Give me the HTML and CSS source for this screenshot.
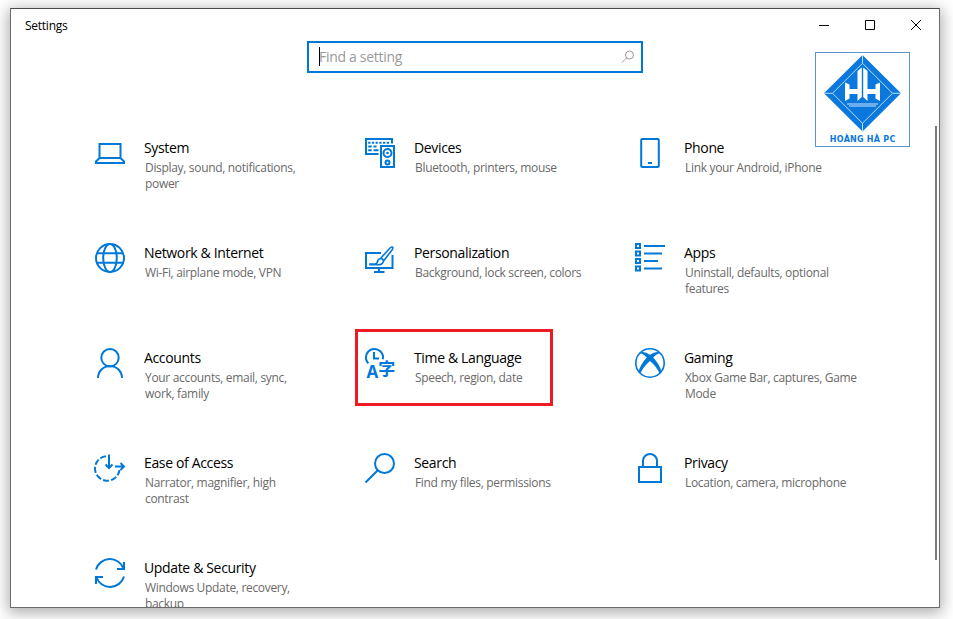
FILE: index.html
```html
<!DOCTYPE html>
<html lang="en">
<head>
<meta charset="utf-8">
<title>Settings</title>
<link rel="stylesheet" href="styles.css">
</head>
<body>
<div class="window">
  <div class="titlebar">
    <span class="caption">Settings</span>
    <svg class="controls" width="102" height="12" viewBox="0 0 102 12">
      <path d="M0 6.500h10M46.500 1.500h9v9h-9zM92 1l10 10M102 1l-10 10"/>
    </svg>
  </div>

  <div class="search">
    <span class="caret"></span>
    <span class="placeholder">Find a setting</span>
    <svg class="glass" width="14" height="14" viewBox="0 0 14 14"><circle cx="8.500" cy="5" r="4"/><path d="M5.600 7.900L1 12.500"/></svg>
  </div>

  <div class="grid">
    <div class="item">
      <svg class="icon" viewBox="0 0 30 30"><path d="M4.500 6h21v14h-21zM4.500 20L1 23.500V25h28v-1.500L25.500 20"/></svg>
      <div class="text"><div class="name">System</div><div class="desc">Display, sound, notifications,<br>power</div></div>
    </div>
    <div class="item">
      <svg class="icon" viewBox="0 0 30 30">
        <path d="M13.500 16H1V1h26v4.500"/>
        <path class="dots" d="M3.200 4.700h22"/>
        <path d="M3.200 8.500h3.500M8.500 8.500h3M3.200 12.300h3.500M8.500 12.300h5"/>
        <path d="M16 8h13v21H16z"/><circle cx="22.500" cy="15" r="4"/><circle cx="22.500" cy="24.500" r="2"/><circle class="fill" cx="22.500" cy="15" r="1.300"/>
      </svg>
      <div class="text"><div class="name">Devices</div><div class="desc">Bluetooth, printers, mouse</div></div>
    </div>
    <div class="item">
      <svg class="icon" viewBox="0 0 30 30"><rect x="6.200" y="1" width="17.600" height="28" rx="1"/><path d="M13 25h4"/></svg>
      <div class="text"><div class="name">Phone</div><div class="desc">Link your Android, iPhone</div></div>
    </div>

    <div class="item">
      <svg class="icon" viewBox="0 0 30 30"><circle cx="15" cy="15" r="14"/><ellipse cx="15" cy="15" rx="6.800" ry="14"/><path d="M2 10.300h26M2 19.700h26"/></svg>
      <div class="text"><div class="name">Network &amp; Internet</div><div class="desc">Wi-Fi, airplane mode, VPN</div></div>
    </div>
    <div class="item">
      <svg class="icon" viewBox="0 0 30 30">
        <path d="M16 10H1v15h26.500V12M14 25v4M9 29h10.500"/>
        <path class="thin" d="M15.500 15.500L25 5q1.800-1.500 2.600-.8t-.6 2.800L18.500 18M15.500 15.500a3 3 0 0 1 3 2.700q-1 3.600-5.500 3.600H5v-.7h5q2 0 2.500-2.600t3-3z"/>
      </svg>
      <div class="text"><div class="name">Personalization</div><div class="desc">Background, lock screen, colors</div></div>
    </div>
    <div class="item">
      <svg class="icon" viewBox="0 0 30 30">
        <path d="M1 1h4v4H1zM1 8.500h4v4H1zM1 16h4v4H1zM1 23.500h4v4H1z"/>
        <path d="M9 3h21M9 10.500h18M9 18h14M9 25.500h18"/>
      </svg>
      <div class="text"><div class="name">Apps</div><div class="desc">Uninstall, defaults, optional<br>features</div></div>
    </div>

    <div class="item">
      <svg class="icon" viewBox="0 0 30 30"><circle cx="15" cy="9.700" r="8.700"/><path d="M3 30a12 12 0 0 1 24 0"/></svg>
      <div class="text"><div class="name">Accounts</div><div class="desc">Your accounts, email, sync,<br>work, family</div></div>
    </div>
    <div class="item marked">
      <svg class="icon" viewBox="0 0 30 30">
        <path d="M3.400 15.400A8.500 8.500 0 1 1 17.800 11.300M9 4v6.500h5"/>
        <text class="latin" x="1.500" y="30">A</text>
        <text class="han" x="13.300" y="27.300">字</text>
      </svg>
      <div class="text"><div class="name">Time &amp; Language</div><div class="desc">Speech, region, date</div></div>
    </div>
    <div class="item">
      <svg class="icon" viewBox="0 0 30 30">
        <circle class="thin" cx="15" cy="15" r="14.200"/>
        <path class="fill" d="M6.200 4.200Q9.500 3 15 6.800Q20.500 3 23.800 4.200L25 5.500Q22.500 5 18.200 9.500Q25.500 17.500 26.300 24L24.800 25.800Q22 19 15 13Q8 19 5.200 25.800L3.700 24Q4.500 17.500 11.800 9.500Q7.500 5 5 5.500z"/>
      </svg>
      <div class="text"><div class="name">Gaming</div><div class="desc">Xbox Game Bar, captures, Game<br>Mode</div></div>
    </div>

    <div class="item">
      <svg class="icon" viewBox="0 0 30 30">
        <path class="dash" d="M11 3.200A12.300 12.300 0 1 0 24.500 17"/>
        <path d="M14 1.500V15M10.500 11.500L14 15l3.500-3.500M20 13.500h9M25.500 10l3.500 3.500-3.500 3.500"/>
      </svg>
      <div class="text"><div class="name">Ease of Access</div><div class="desc">Narrator, magnifier, high<br>contrast</div></div>
    </div>
    <div class="item">
      <svg class="icon" viewBox="0 0 30 30"><circle cx="19.500" cy="10.500" r="9.500"/><path d="M12.800 17.200L.5 29.500"/></svg>
      <div class="text"><div class="name">Search</div><div class="desc">Find my files, permissions</div></div>
    </div>
    <div class="item">
      <svg class="icon" viewBox="0 0 30 30"><path d="M4 14h22v15H4zM8 14V8a7 7 0 0 1 14 0v6"/></svg>
      <div class="text"><div class="name">Privacy</div><div class="desc">Location, camera, microphone</div></div>
    </div>

    <div class="item">
      <svg class="icon" viewBox="0 0 30 30"><path d="M1 11.500A14.500 14.500 0 0 1 28.500 10.500M29 4v7h-7M29 18.500A14.500 14.500 0 0 1 1.500 19.500M1 26v-7h7"/></svg>
      <div class="text"><div class="name">Update &amp; Security</div><div class="desc">Windows Update, recovery,<br>backup</div></div>
    </div>
  </div>

  <div class="scrollbar"></div>

  <svg class="logo" viewBox="0 0 95 95">
    <rect class="frame" x=".5" y=".5" width="94" height="94"/>
    <path class="fill" d="M47.500 3L86 41.300 47.500 79.600 9 41.300z"/>
    <path class="line" d="M47.500 11.300l30 30-30 30-30-30zM47.500 3v8.300M47.500 71.300v8.300M9 41.300h8.500M77.500 41.300H86"/>
    <!-- pillars and the base under them -->
    <path class="white" d="M30 30.500l4.500 2v4.500H42.500V19l4.300-3.500V45l-4.300 4v-7h-8v4.500L30 49zM65 30.500l-4.500 2v4.500H52.500V19l-4.300-3.500V45l4.300 4v-7h8v4.500L65 49z"/>
    <path class="base" d="M32 52h31M34 54h27"/>
    <text x="47.700" y="90">HOÀNG HÀ PC</text>
  </svg>
</div>
</body>
</html>
```
FILE: styles.css
```css
* { box-sizing: border-box; }
body {
  margin: 0; height: 619px; padding: 8px 13px 0 10px; overflow: hidden; background: #fff;
  font-family: "Open Sans", "Noto Sans", sans-serif;
}

.window {
  position: relative; height: 600px; overflow: hidden;
  background: #fff; border: 1px solid #6b6b6b; border-top-color: #4a4a4a;
  box-shadow: 0 3px 14px 2px rgba(0, 0, 0, 0.32);
}

.titlebar { display: flex; justify-content: space-between; height: 32px; padding: 0 18px 0 14px; }
.caption { font-size: 12px; line-height: 34px; letter-spacing: -0.25px; color: #000; }
.controls { margin-top: 10px; fill: none; stroke: #000; stroke-width: 1; }

.search {
  display: flex; align-items: center; width: 336px; height: 32px; margin-left: 296px;
  padding: 0 6px 0 10px; border: 2px solid #0078d7;
}
.caret { width: 1px; height: 19px; margin-top: -2px; background: #000; }
.placeholder { flex: 1; margin-left: -1px; padding-bottom: 2px; font-size: 14px; letter-spacing: -0.3px; color: #999; }
.glass { fill: none; stroke: #999; stroke-width: 1; }

.grid {
  display: grid; grid-template-columns: repeat(3, 270px); grid-auto-rows: 105px;
  margin-top: 65px; padding-left: 84px;
}
.item { position: relative; display: flex; gap: 19px; }
.icon { width: 30px; height: 30px; flex: none; overflow: visible; fill: none; stroke: #0078d7; stroke-width: 2; }
.icon .thin { stroke-width: 1.6; }
.icon .dots { stroke-dasharray: 2.3 1.4; }
.icon .dash { stroke-dasharray: 6 2.2; }
.icon .fill { fill: #0078d7; stroke: none; }
.icon text { fill: #0078d7; stroke: none; font-weight: bold; }
.latin { font-size: 17px; }
.han { font-family: "Noto Sans CJK SC", sans-serif; font-size: 17px; }

.name { font-size: 14px; line-height: 20px; letter-spacing: -0.35px; color: #000; }
.desc { font-size: 12px; line-height: 16px; padding: 2px 0 0 1px; letter-spacing: -0.32px; color: #6a6a6a; white-space: nowrap; }

/* red box round the entry */
.marked::before {
  content: ""; position: absolute; box-sizing: border-box; left: -10px; top: -19px; width: 198px; height: 77px;
  border: 3px solid #ed1c24;
}

.scrollbar { position: absolute; right: 2px; top: 117px; width: 2px; height: 434px; background: #7a7a7a; }

.logo { position: absolute; left: 804px; top: 43px; width: 95px; height: 95px; }
.logo .frame { fill: #fff; stroke: #5b93d3; }
.logo .fill { fill: #0b78de; }
.logo .line { fill: none; stroke: #b9dcfa; stroke-width: 1; }
.logo .white { fill: #fff; }
.logo .base { stroke: #8cc0f2; stroke-width: 1.300; }
.logo text { font: bold 8px "DejaVu Sans", sans-serif; letter-spacing: 0.25px; fill: #0b78de; text-anchor: middle; }
```
